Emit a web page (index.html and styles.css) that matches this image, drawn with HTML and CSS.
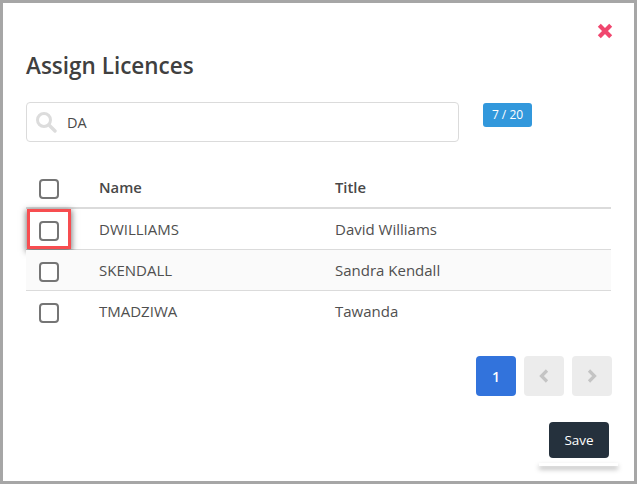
FILE: index.html
```html
<!DOCTYPE html>
<html lang="en">
<head>
<meta charset="utf-8">
<title>Assign Licences</title>
<link rel="stylesheet" href="styles.css">
</head>
<body>
<div class="modal">
  <div class="close-row">
    <svg class="close" viewBox="0 0 16 16" width="16" height="16"><path d="M2.3 2.3 13.7 13.7M13.7 2.3 2.3 13.7" stroke="#f0466e" stroke-width="4.2" fill="none"/></svg>
  </div>
  <h1 class="title">Assign Licences</h1>
  <div class="search-row">
    <div class="search">
      <svg class="search-icon" viewBox="0 0 22 22" width="22" height="22"><circle cx="9" cy="9" r="6.5" fill="none" stroke="#dcdcdc" stroke-width="3"/><path d="M14 14 20 20" stroke="#dcdcdc" stroke-width="3.4" stroke-linecap="round"/></svg>
      <span class="search-text">DA</span>
    </div>
    <span class="badge">7 / 20</span>
  </div>
  <div class="table">
    <div class="row head">
      <div class="cell-check"><span class="check"></span></div>
      <div class="cell-name">Name</div>
      <div class="cell-title">Title</div>
    </div>
    <div class="row">
      <div class="cell-check"><span class="check"></span></div>
      <div class="cell-name">DWILLIAMS</div>
      <div class="cell-title">David Williams</div>
      <span class="highlight"></span>
    </div>
    <div class="row striped">
      <div class="cell-check"><span class="check"></span></div>
      <div class="cell-name">SKENDALL</div>
      <div class="cell-title">Sandra Kendall</div>
    </div>
    <div class="row">
      <div class="cell-check"><span class="check"></span></div>
      <div class="cell-name">TMADZIWA</div>
      <div class="cell-title">Tawanda</div>
    </div>
  </div>
  <div class="pager">
    <span class="page active">1</span>
    <span class="page"><svg viewBox="0 0 12 14" width="12" height="14"><path d="M9 1.5 3.5 7 9 12.5" fill="none" stroke="#c4c4c4" stroke-width="3.2"/></svg></span>
    <span class="page"><svg viewBox="0 0 12 14" width="12" height="14"><path d="M3 1.5 8.5 7 3 12.5" fill="none" stroke="#c4c4c4" stroke-width="3.2"/></svg></span>
  </div>
  <div class="actions">
    <button class="save">Save</button>
  </div>
  <span class="save-shadow"></span>
</div>
</body>
</html>
```
FILE: styles.css
```css
* { box-sizing: border-box; }
html, body { margin: 0; padding: 0; }
body { width: 637px; height: 484px; overflow: hidden; background: #fff; font-family: "Open Sans", "Noto Sans", sans-serif; color: #444; }
.modal { position: relative; width: 637px; height: 484px; border: 3px solid #a6a6a6; background: #fff; padding: 0 23px; }
.close-row { display: flex; justify-content: flex-end; padding: 20px 0 0; height: 36px; margin-right: -2px; }
.close { display: block; }
.title { margin: 10px 0 0; font-size: 22.5px; line-height: 34px; font-weight: 600; color: #404040; }
.search-row { display: flex; align-items: flex-start; margin-top: 19px; }
.search { display: flex; align-items: center; width: 433px; height: 40px; border: 1px solid #dbdbdb; border-radius: 4px; padding-left: 8px; }
.search-icon { display: block; }
.search-text { margin-left: 10px; font-size: 14.5px; color: #4a4a4a; }
.badge { margin: 1px 0 0 24px; width: 49px; height: 24px; border-radius: 3px; background: #3298dc; color: #fff; font-size: 12px; line-height: 24px; text-align: center; }
.table { margin-top: 25px; width: 585px; font-size: 15px; color: #4f4f4f; }
.row { position: relative; display: flex; align-items: center; height: 41px; border-bottom: 1px solid #dbdbdb; }
.row:last-child { border-bottom-color: transparent; }
.row.head { height: 42px; border-bottom: 2px solid #dbdbdb; font-size: 14.8px; font-weight: 600; color: #484848; }
.striped { background: #fafafa; }
.cell-check { width: 73px; padding: 4px 0 0 13px; display: flex; }
.cell-name { width: 236px; }
.check { display: block; width: 20px; height: 20px; border: 2px solid #757575; border-radius: 4px; background: #fff; }
.highlight { position: absolute; left: 1px; top: 0; width: 44px; height: 40px; border: 3px solid #f74d50; box-shadow: 0 2px 6px 1px rgba(0,0,0,.5); }
.pager { display: flex; gap: 8px; justify-content: flex-end; margin-top: 24px; margin-right: -1px; }
.page { display: flex; align-items: center; justify-content: center; width: 40px; height: 40px; border-radius: 4px; background: #ececec; }
.page.active { background: #3273dc; color: #fff; font-size: 14px; font-weight: 600; }
.actions { display: flex; justify-content: flex-end; margin-top: 26px; margin-right: 2px; }
.save { width: 60px; height: 36px; border: 0; border-radius: 4px; background: #25313d; color: #fff; font: 400 13.5px "Open Sans", "Noto Sans", sans-serif; padding: 0; }
.save-shadow { position: absolute; left: 536px; top: 460px; width: 79px; height: 3px; box-shadow: 0 3px 5px rgba(0,0,0,.35); }
```
